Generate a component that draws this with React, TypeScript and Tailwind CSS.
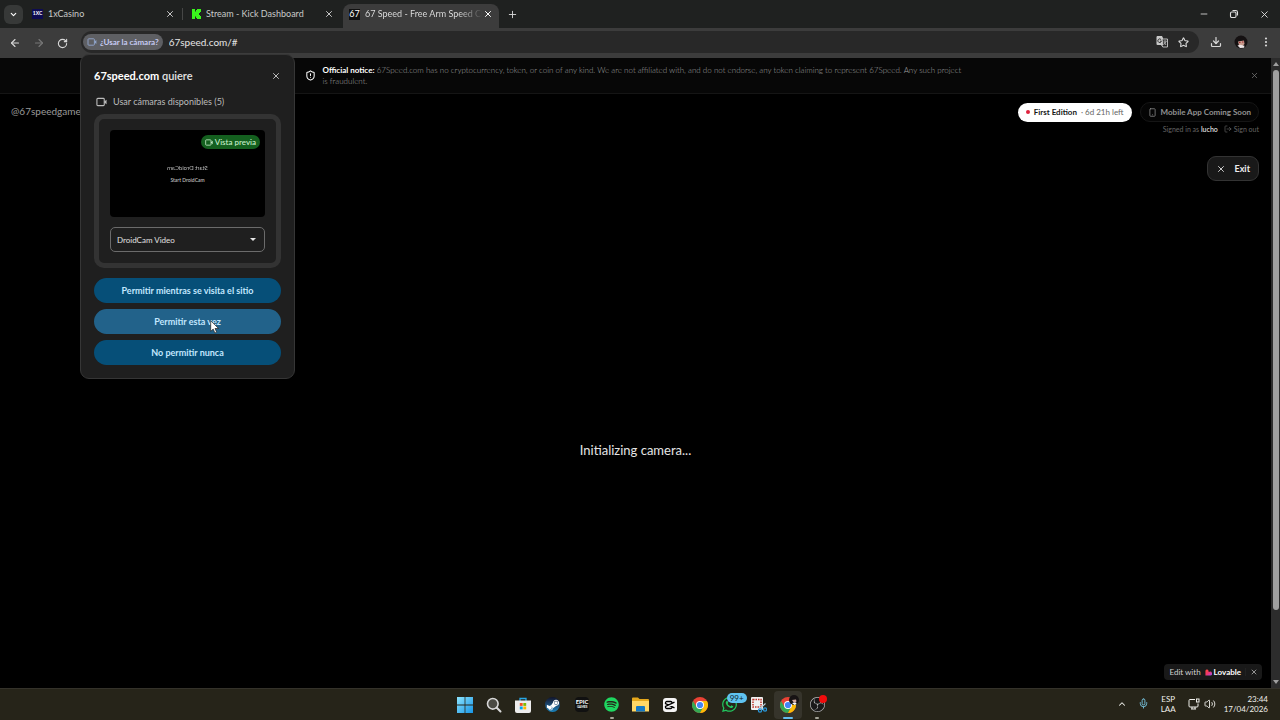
import type { ReactNode } from "react";
import {
  ArrowLeft,
  ArrowRight,
  ChevronDown,
  ChevronUp,
  Download,
  EllipsisVertical,
  LogOut,
  Mic,
  Minus,
  Plus,
  RotateCw,
  ShieldAlert,
  Smartphone,
  Star,
  Volume2,
  X,
} from "lucide-react";
import { FaSpotify, FaSteamSymbol, FaWhatsapp } from "react-icons/fa";
import { SiObsstudio } from "react-icons/si";

const CameraIcon = ({ className }: { className?: string }) => (
  <svg viewBox="0 0 12 10" fill="none" stroke="currentColor" className={className}>
    <rect x="1" y="1" width="8" height="8" rx="1" strokeWidth="1.2" />
    <path d="M9 4.5 11.5 2.5v5L9 5.5z" fill="currentColor" stroke="none" />
  </svg>
);

const Tab = ({ icon, title }: { icon: ReactNode; title: string }) => (
  <div className="flex w-[158px] items-center gap-1 pl-2 pr-[7px]">
    {icon}
    <span className="flex-1 truncate text-[9px] text-[#c9cac9]">{title}</span>
    <button aria-label={`Cerrar ${title}`} className="text-[#d5d5d5]">
      <X size={10} strokeWidth={2.2} />
    </button>
  </div>
);

const TabStrip = () => (
  <div className="flex h-7 items-center bg-[#1f2120] pl-1">
    <button aria-label="Buscar pestañas" className="mr-px flex size-[19px] items-center justify-center rounded-md bg-[#373938] text-white">
      <ChevronDown size={9} strokeWidth={3} />
    </button>
    <Tab
      title="1xCasino"
      icon={
        <span className="mr-px flex h-2.5 w-[11px] items-center justify-center bg-[#0d0b52] text-[5px] font-bold text-white">
          1XC
        </span>
      }
    />
    <span className="h-3 w-px bg-[#464746]" />
    <Tab
      title="Stream - Kick Dashboard"
      icon={
        <svg viewBox="0 0 10 10" className="mr-px size-2.5 shrink-0">
          <path d="M1 0h3v2.500h1V1h1V0h4v3H9v1H8v2h1v1h1v3H6V9H5V7.500H4V10H1z" fill="#39f51c" />
        </svg>
      }
    />
    <div className="ml-0.5 flex h-6 w-[156px] items-center self-end rounded-t-lg bg-[#3c3c3c] px-1.5 pb-1">
      <span className="mr-[5px] flex size-[11px] shrink-0 items-center justify-center bg-[#101010] text-[9px] text-white">67</span>
      <span className="min-w-0 flex-1 whitespace-nowrap bg-linear-to-r from-[#e4e4e4] from-80% to-[#3c3c3c] bg-clip-text text-[9px] text-transparent">
        67 Speed - Free Arm Speed Cha
      </span>
      <button aria-label="Cerrar pestaña" className="text-white">
        <X size={10} strokeWidth={2.4} />
      </button>
    </div>
    <button aria-label="Nueva pestaña" className="ml-2 text-[#d8d8d8]">
      <Plus size={11} strokeWidth={2} />
    </button>
    <div className="ml-auto flex items-center gap-5 pr-2.5 text-[#e0e0e0]">
      <button aria-label="Minimizar"><Minus size={10} strokeWidth={2} /></button>
      <button aria-label="Restaurar">
        <svg viewBox="0 0 10 10" className="size-2.5" fill="none" stroke="currentColor" strokeWidth="1.1">
          <rect x="1.5" y="3" width="5.5" height="5.5" rx="1.2" />
          <path d="M3.5 1.5h3.2a1.8 1.8 0 0 1 1.8 1.8v3.2" />
        </svg>
      </button>
      <button aria-label="Cerrar"><X size={11} strokeWidth={2} /></button>
    </div>
  </div>
);

const Toolbar = () => (
  <div className="flex h-[30px] items-center bg-[#3c3c3c] pl-[9px] pr-2 text-[#d8d8d8]">
    <div className="flex w-[72px] items-center gap-3">
      <button aria-label="Atrás"><ArrowLeft size={12} strokeWidth={2.2} /></button>
      <button aria-label="Adelante" className="text-[#777777]"><ArrowRight size={12} strokeWidth={2.2} /></button>
      <button aria-label="Recargar"><RotateCw size={11} strokeWidth={2.4} /></button>
    </div>
    <div className="mb-0.5 flex h-[22px] flex-1 items-center gap-1.5 rounded-full bg-[#282828] pl-0.5 pr-2.5">
      <button className="flex h-4 items-center gap-[3px] rounded-full bg-[#5e5f63] px-1 text-[8px] font-bold text-[#c6cbf3]">
        <CameraIcon className="h-2 w-[10px] text-[#8fa3c9]" />
        ¿Usar la cámara?
      </button>
      <input
        aria-label="Dirección"
        defaultValue="67speed.com/#"
        className="flex-1 bg-transparent text-[10px] text-[#e6e6e6] outline-none"
      />
      <button aria-label="Traducir">
        <svg viewBox="0 0 12 12" className="size-3">
          <path d="M1 0h5l1 2v7H1.500A1 1 0 0 1 .5 8V1z" fill="#c9c9c9" />
          <path d="M6 3h5.500v8H6.800L5.500 9H7z" fill="#282828" stroke="#c9c9c9" strokeWidth=".9" />
          <path d="M5.200 3.800A1.800 1.800 0 1 0 5.400 5.200H4" fill="none" stroke="#282828" strokeWidth=".9" />
          <path d="M7.500 5.200h3M9 4.400v.8M8 6l2 3M10.300 5.500 8 8.500" fill="none" stroke="#c9c9c9" strokeWidth=".8" />
        </svg>
      </button>
      <button aria-label="Favorito" className="ml-1"><Star size={11} strokeWidth={2.4} /></button>
    </div>
    <div className="mb-0.5 ml-[11px] flex items-center gap-3">
      <button aria-label="Descargas"><Download size={12} strokeWidth={2.4} /></button>
      <button aria-label="Perfil">
        <svg viewBox="0 0 14 14" className="size-3.5">
          <circle cx="7" cy="7" r="6.500" fill="#151112" />
          <path d="M4 6.500l6-1 .5 3.500L8 11.500l-3-1z" fill="#c79a8c" />
          <path d="M3.500 10.500 6 9.800l4.500 1-.5 2L6 13z" fill="#ece5e6" />
          <path d="M5 7.500h1.500M8 7h1.500" stroke="#a2202c" strokeWidth=".9" />
        </svg>
      </button>
      <button aria-label="Menú"><EllipsisVertical size={12} strokeWidth={2.4} /></button>
    </div>
  </div>
);

const Notice = () => (
  <div className="flex h-9 items-center border-b border-[#151515] bg-[#070707]">
    <div className="flex-1 pl-3" />
    <div className="flex w-[662px] items-center gap-[7px]">
      <ShieldAlert size={11} strokeWidth={2.2} className="shrink-0 text-white" />
      <p className="w-[640px] text-[8px] font-light leading-[11px] text-[#a0a0a0]">
        <strong className="font-bold text-white">Official notice:</strong> 67Speed.com has no cryptocurrency, token, or coin of any kind. We are not affiliated with, and do not endorse, any token claiming to represent 67Speed. Any such project is fraudulent.
      </p>
    </div>
    <div className="flex flex-1 justify-end pr-3">
      <button aria-label="Dismiss notice" className="text-[#777777]"><X size={9} /></button>
    </div>
  </div>
);

const PageHeader = () => (
  <header className="flex items-start justify-between pb-8 pl-[11px] pr-3 pt-2">
    <a href="#profile" className="mt-[3px] text-[10px] leading-3 text-[#9a9a9a]">@67speedgame</a>
    <div className="flex flex-col items-end">
      <div className="flex items-center gap-2">
        <div className="flex h-[19px] items-center rounded-full bg-white px-2 text-[8px] text-[#666666]">
          <span className="mr-1 size-1 rounded-full bg-[#e0233e]" />
          <b className="mr-1 font-bold text-[#161616]">First Edition</b>· 6d 21h left
        </div>
        <button className="flex h-5 items-center gap-1 rounded-full border border-[#151515] bg-[#050505] px-[7px] text-[8px] font-bold text-[#929292]">
          <Smartphone size={9} />
          Mobile App Coming Soon
        </button>
      </div>
      <div className="mt-px flex h-3 items-center gap-1.5 text-[7px] text-[#656565]">
        <span>Signed in as <b className="font-semibold text-[#dddddd]">lucho</b></span>
        <button className="flex items-center gap-0.5"><LogOut size={8} />Sign out</button>
      </div>
      <button className="mt-[21px] flex h-[25px] items-center gap-2 rounded-[9px] border border-[#333333] bg-[#191919] px-2 text-[9px] font-bold text-[#ededed]">
        <X size={10} strokeWidth={2} />
        Exit
      </button>
    </div>
  </header>
);

const choices = [
  { label: "Permitir mientras se visita el sitio", color: "bg-[#064f78]" },
  { label: "Permitir esta vez", color: "bg-[#22628a]" },
  { label: "No permitir nunca", color: "bg-[#064f78]" },
];

const CameraPrompt = () => (
  <div role="dialog" aria-labelledby="prompt-title" className="absolute left-20 top-[54px] w-[215px] rounded-[9px] border border-[#363636] bg-[#1f1f1f] px-[13px] pb-[13px] pt-[13px]">
    <div className="flex h-4 items-center justify-between">
      <h2 id="prompt-title" className="text-[11px] font-semibold text-[#e3e3e3]">
        <b className="font-bold text-white">67speed.com</b> quiere
      </h2>
      <button aria-label="Cerrar" className="text-[#dddddd]"><X size={10} strokeWidth={2} /></button>
    </div>
    <div className="mt-3 flex h-3 items-center gap-1.5 pl-0.5 text-[9px] text-[#bcbcbc]">
      <CameraIcon className="h-2.5 w-[11px]" />
      Usar cámaras disponibles (5)
    </div>
    <div className="mt-[6px] rounded-[10px] border-[5px] border-[#333333] px-[11px] pb-[11px] pt-[11px]">
      <div className="relative flex h-[87px] flex-col items-center justify-center gap-1 rounded bg-black text-[5px] leading-2 text-[#bbbbbb]">
        <span className="-scale-x-100 text-[6px]">Start DroidCam</span>
        <span className="font-semibold">Start DroidCam</span>
        <span className="absolute right-[5px] top-[5px] flex h-[14px] items-center gap-0.5 rounded-full bg-[#14601f] px-1 text-[8px] font-medium text-[#c9efcb]">
          <CameraIcon className="h-[7px] w-2" />
          Vista previa
        </span>
      </div>
      <div className="relative mt-[10px]">
        <select aria-label="Cámara" className="block h-[25px] w-full appearance-none rounded-[5px] border border-[#6b6b6b] bg-transparent px-1.5 text-[8px] text-[#e0e0e0]">
          <option>DroidCam Video</option>
        </select>
        <span className="pointer-events-none absolute right-[9px] top-[11px] border-x-3 border-t-3 border-x-transparent border-t-[#e5e5e5]" />
      </div>
    </div>
    <div className="mt-[10px] flex flex-col gap-[6px]">
      {choices.map((choice) => (
        <button key={choice.label} className={`h-[25px] rounded-full text-[9px] font-bold text-[#c2e7ff] ${choice.color}`}>
          {choice.label}
        </button>
      ))}
    </div>
    <svg viewBox="0 0 10 14" className="absolute left-[129px] top-[265px] h-[14px] w-[10px]">
      <path d="M.7.800v10.500l2.500-2.200 1.700 3.900 1.800-.8L5 8.500h3.600z" fill="white" stroke="#222222" strokeWidth=".7" />
    </svg>
  </div>
);

const ScrollBar = () => (
  <div className="flex w-[9px] flex-col items-center bg-[#2c2c2c] py-1">
    <span className="border-x-3 border-b-4 border-x-transparent border-b-[#9f9f9f]" />
    <span className="mt-1 w-1.5 flex-[540_0_0] rounded-full bg-[#9f9f9f]" />
    <span className="flex-[70_0_0]" />
    <span className="border-x-3 border-t-4 border-x-transparent border-t-[#9f9f9f]" />
  </div>
);

const LovableBadge = () => (
  <div className="absolute bottom-2 right-[9px] flex h-4 items-center rounded bg-[#191919] pl-[5px] text-[8px] text-[#d0d0d0]">
    <a href="#lovable" className="flex items-center">
      Edit with
      <svg viewBox="0 0 8 8" className="ml-1 mr-0.5 size-[7px]">
        <defs>
          <linearGradient id="heart" x1="0" y1="0" x2="1" y2="1">
            <stop offset="0" stopColor="#ff4b35" />
            <stop offset=".5" stopColor="#f0356e" />
            <stop offset="1" stopColor="#9c52f5" />
          </linearGradient>
        </defs>
        <path d="M.5 2A1.800 1.800 0 0 1 4 2v1h1.700A2 2 0 0 1 6 7.500H.5z" fill="url(#heart)" />
      </svg>
      <b className="font-bold text-white">Lovable</b>
    </a>
    <button aria-label="Close badge" className="ml-1 border-l border-[#222222] px-1"><X size={8} /></button>
  </div>
);

const Chrome = ({ className }: { className?: string }) => (
  <svg viewBox="0 0 16 16" className={className}>
    <circle cx="8" cy="8" r="8" fill="#e94235" />
    <path d="M1.070 4A8 8 0 0 0 8 16l3.460-6H8L4.540 10z" fill="#34a853" />
    <path d="M14.930 4A8 8 0 0 1 8 16l3.460-6A4 4 0 0 0 8 4z" fill="#fbbc05" />
    <circle cx="8" cy="8" r="4" fill="white" />
    <circle cx="8" cy="8" r="3.100" fill="#4285f4" />
  </svg>
);

const apps: { name: string; icon: ReactNode; active?: boolean; running?: boolean }[] = [
  {
    name: "Inicio",
    icon: (
      <svg viewBox="0 0 16 16" className="size-4">
        <defs>
          <linearGradient id="win" x1="0" y1="0" x2="1" y2="1">
            <stop offset="0" stopColor="#8de5ff" />
            <stop offset="1" stopColor="#1695e6" />
          </linearGradient>
        </defs>
        <path d="M0 0h7.600v7.600H0zM8.400 0H16v7.600H8.400zM0 8.400h7.600V16H0zM8.400 8.400H16V16H8.400z" fill="url(#win)" />
      </svg>
    ),
  },
  {
    name: "Buscar",
    icon: (
      <svg viewBox="0 0 16 16" className="size-4">
        <circle cx="6.800" cy="6.800" r="5.300" fill="#4b4a43" stroke="#d8d8d8" strokeWidth="1.600" />
        <path d="m10.800 10.800 3.700 3.700" stroke="#d8d8d8" strokeWidth="2" strokeLinecap="round" />
      </svg>
    ),
  },
  {
    name: "Store",
    icon: (
      <svg viewBox="0 0 16 16" className="size-4">
        <path d="M5 4V1.500h6V4" fill="none" stroke="#28a8e8" strokeWidth="1.300" />
        <path d="M0 3.500h16V14a2 2 0 0 1-2 2H2a2 2 0 0 1-2-2z" fill="#ededed" />
        <path d="M4.800 6h2.900v2.900H4.800z" fill="#f25022" />
        <path d="M8.300 6h2.900v2.900H8.300z" fill="#7fba00" />
        <path d="M4.800 9.500h2.900v2.900H4.800z" fill="#00a4ef" />
        <path d="M8.300 9.500h2.900v2.900H8.300z" fill="#ffb900" />
      </svg>
    ),
  },
  {
    name: "Steam",
    icon: (
      <span className="flex size-[15px] items-center justify-center rounded-full bg-linear-to-b from-[#10152c] to-[#1683bd]">
        <FaSteamSymbol size={14} color="white" />
      </span>
    ),
  },
  {
    name: "Epic Games",
    icon: (
      <span className="flex h-[15px] w-[14px] flex-col items-center rounded-sm bg-[#111111] pt-px text-[6px] font-bold leading-[7px] text-white">
        EPIC
        <span className="text-[3px] leading-1">GAMES</span>
      </span>
    ),
  },
  { name: "Spotify", icon: <FaSpotify size={15} color="#1ed760" />, running: true },
  {
    name: "Explorador",
    icon: (
      <svg viewBox="0 0 17 15" className="h-[15px] w-[17px]">
        <path d="M0 1.500A1 1 0 0 1 1 .5h5L7.500 2H16a1 1 0 0 1 1 1v11H0z" fill="#e5a81c" />
        <path d="M0 4h17v10.500H0z" fill="#ffd766" />
        <path d="M4 10a1 1 0 0 1 1-1h7a1 1 0 0 1 1 1v4.500H4z" fill="#1478c4" />
      </svg>
    ),
  },
  {
    name: "CapCut",
    icon: (
      <svg viewBox="0 0 14 14" className="size-[14px]">
        <rect width="14" height="14" rx="3" fill="#f4f4f4" />
        <path d="M9 5.200V4.800A1.300 1.300 0 0 0 7.700 3.500H3.800a1.300 1.300 0 0 0-1.300 1.300v.7l9 4.300M9 8.800v.4a1.300 1.300 0 0 1-1.300 1.300H3.800a1.300 1.300 0 0 1-1.300-1.300v-.7l9-4.300" fill="none" stroke="black" strokeWidth="1.300" />
      </svg>
    ),
  },
  { name: "Chrome", icon: <Chrome className="size-4" /> },
  {
    name: "WhatsApp",
    icon: (
      <span className="relative">
        <FaWhatsapp size={17} color="#22c55e" />
        <span className="absolute -top-[3px] left-1.5 rounded-full bg-[#5fc3f0] px-[3px] text-[8px] leading-[10px] text-[#12222b]">99+</span>
      </span>
    ),
  },
  {
    name: "Recortes",
    icon: (
      <svg viewBox="0 0 16 16" className="size-4">
        <rect x="0" y="0" width="12" height="13" rx="1" fill="#f0f0f0" />
        <rect x="2" y="2.500" width="8" height="7.500" fill="none" stroke="#bf3329" strokeWidth="1.500" strokeDasharray="1.500 1" />
        <path d="M14.500 6.500 8 12.500M8 9.500l5 3.500" stroke="#b7ccd8" strokeWidth="1.200" />
        <circle cx="9" cy="13.500" r="1.600" fill="none" stroke="#2996d8" strokeWidth="1.300" />
        <circle cx="14" cy="12.500" r="1.600" fill="none" stroke="#2996d8" strokeWidth="1.300" />
      </svg>
    ),
  },
  {
    name: "Chrome, 67 Speed",
    active: true,
    icon: (
      <span className="relative">
        <Chrome className="size-4" />
        <svg viewBox="0 0 10 10" className="absolute -right-[3px] -top-0.5 size-2.5">
          <circle cx="5" cy="5" r="5" fill="#171314" />
          <path d="M3 5l4-.5.500 2L5 8z" fill="#d3aaa0" />
          <path d="m3 8 4-.5.500 1.500-2 1z" fill="white" />
        </svg>
      </span>
    ),
  },
  {
    name: "OBS",
    running: true,
    icon: (
      <span className="relative">
        <span className="flex size-[15px] items-center justify-center rounded-full bg-[#191919]">
          <SiObsstudio size={15} color="#b9b9b9" />
        </span>
        <span className="absolute -right-0.5 -top-0.5 size-2 rounded-full bg-[#f10c0c]" />
      </span>
    ),
  },
];

const Taskbar = () => (
  <footer className="flex h-8 items-center border-t border-[#34322a] bg-[#262419]">
    <div className="flex-1 pl-3.5" />
    <nav className="flex w-[381px] justify-between">
      {apps.map((app) => (
        <button
          key={app.name}
          aria-label={app.name}
          className={`relative flex h-7 w-7 items-center justify-center rounded ${app.active ? "bg-[#36342b]" : ""}`}
        >
          {app.icon}
          {app.active && <span className="absolute bottom-0 h-0.5 w-2.5 rounded-full bg-[#63bdf0]" />}
          {app.running && <span className="absolute bottom-0 h-0.5 w-1 rounded-full bg-[#a5a498]" />}
        </button>
      ))}
    </nav>
    <div className="flex flex-1 items-center justify-end pb-0.5 pr-3 text-[8px] leading-[10px] text-[#efefeb]">
      <button aria-label="Iconos ocultos"><ChevronUp size={10} strokeWidth={2.5} /></button>
      <button aria-label="Micrófono" className="ml-[11px] text-[#7ac7e3]"><Mic size={11} /></button>
      <button className="ml-3 text-center">ESP<br />LAA</button>
      <button aria-label="Red y volumen" className="ml-3 flex items-center gap-1">
        <svg viewBox="0 0 12 12" className="size-3" fill="none" stroke="currentColor" strokeWidth="1">
          <path d="M7 1.500H2a1 1 0 0 0-1 1V8a1 1 0 0 0 1 1h7a1 1 0 0 0 1-1V5.500M3 11h5M4 9v2M7 9v2" />
          <rect x="8.500" y="1" width="2.500" height="3" />
        </svg>
        <Volume2 size={12} strokeWidth={1.8} />
      </button>
      <time className="ml-2 text-right">23:44<br />17/04/2026</time>
    </div>
  </footer>
);

export default function App() {
  return (
    <div className="relative flex min-h-screen flex-col bg-black font-['Lato','Open_Sans',sans-serif]">
      <TabStrip />
      <Toolbar />
      <div className="flex flex-1">
        <main className="relative flex flex-1 flex-col bg-black">
          <Notice />
          <PageHeader />
          <div className="flex flex-1 items-center justify-center">
            <p className="text-[13px] text-[#e5e5e5]">Initializing camera...</p>
          </div>
          <LovableBadge />
        </main>
        <ScrollBar />
      </div>
      <Taskbar />
      <CameraPrompt />
    </div>
  );
}
